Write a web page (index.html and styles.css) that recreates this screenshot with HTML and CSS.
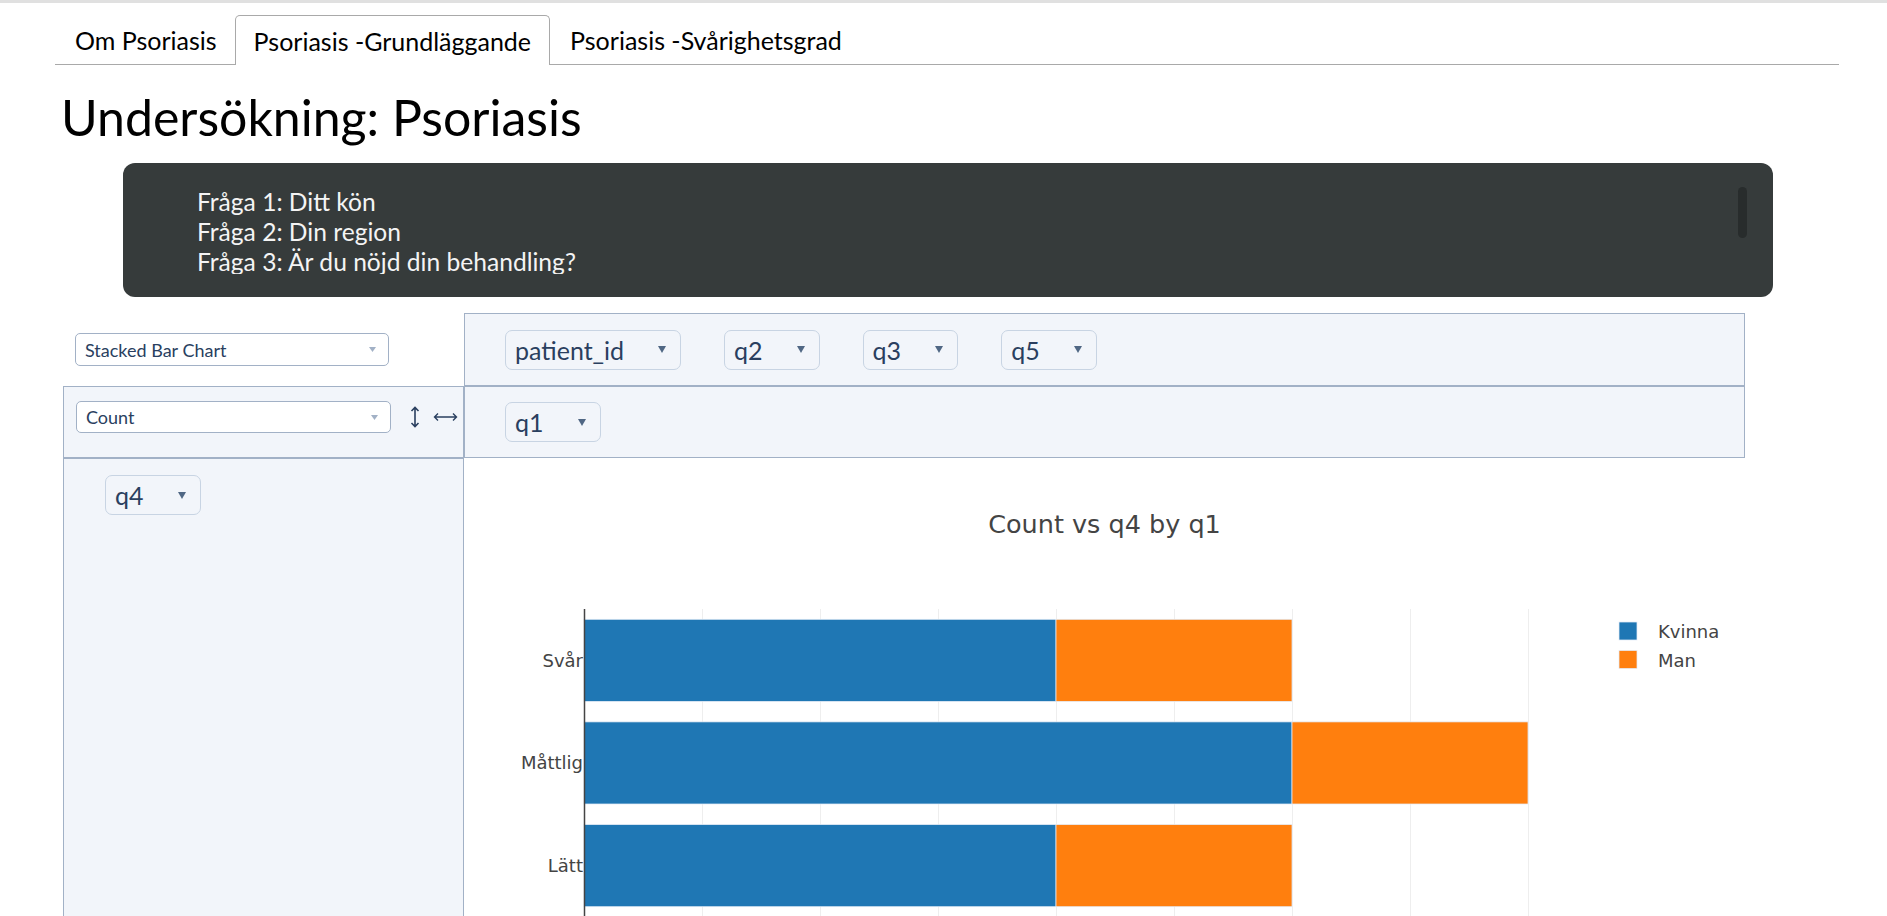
FILE: index.html
```html
<!DOCTYPE html>
<html lang="sv">
<head>
<meta charset="utf-8">
<title>Undersökning: Psoriasis</title>
<link rel="stylesheet" href="styles.css">
</head>
<body>
<div class="topline"></div>
<div class="page">
  <nav class="tabs">
    <div class="tab">Om Psoriasis</div>
    <div class="tab active">Psoriasis -Grundläggande</div>
    <div class="tab">Psoriasis -Svårighetsgrad</div>
  </nav>

  <h1 class="title">Undersökning: Psoriasis</h1>

  <div class="questions">
    <div class="questions-view">
      <p>Fråga 1: Ditt kön</p>
      <p>Fråga 2: Din region</p>
      <p>Fråga 3: Är du nöjd din behandling?</p>
    </div>
    <div class="scroll-track"><div class="scroll-thumb"></div></div>
  </div>

  <div class="pvt">
    <div class="cell renderer">
      <div class="dropdown">
        <span>Stacked Bar Chart</span>
        <svg class="dd-caret" width="7" height="5" viewBox="0 0 7 5"><polygon points="0,0 7,0 3.5,5" fill="#a2b1c6"/></svg>
      </div>
    </div>

    <div class="cell axis unused">
      <span class="pill">patient_id<svg class="pill-caret" width="8" height="7" viewBox="0 0 8 7"><polygon points="0,0 8,0 4,7" fill="#506784"/></svg></span>
      <span class="pill">q2<svg class="pill-caret" width="8" height="7" viewBox="0 0 8 7"><polygon points="0,0 8,0 4,7" fill="#506784"/></svg></span>
      <span class="pill">q3<svg class="pill-caret" width="8" height="7" viewBox="0 0 8 7"><polygon points="0,0 8,0 4,7" fill="#506784"/></svg></span>
      <span class="pill">q5<svg class="pill-caret" width="8" height="7" viewBox="0 0 8 7"><polygon points="0,0 8,0 4,7" fill="#506784"/></svg></span>
    </div>

    <div class="cell axis vals">
      <div class="vals-row">
        <div class="dropdown dropdown-count">
          <span>Count</span>
          <svg class="dd-caret" width="7" height="5" viewBox="0 0 7 5"><polygon points="0,0 7,0 3.5,5" fill="#a2b1c6"/></svg>
        </div>
        <svg class="order-v" width="10" height="22" viewBox="0 0 10 22"><path d="M5 1.5 V20.5 M1.5 5 L5 1.5 L8.5 5 M1.5 17 L5 20.5 L8.5 17" fill="none" stroke="#2a3f5f" stroke-width="1.6"/></svg>
        <svg class="order-h" width="25" height="12" viewBox="0 0 25 12"><path d="M1.5 6 H23.5 M5 2.5 L1.5 6 L5 9.5 M20 2.5 L23.5 6 L20 9.5" fill="none" stroke="#2a3f5f" stroke-width="1.4"/></svg>
      </div>
    </div>

    <div class="cell axis cols">
      <span class="pill">q1<svg class="pill-caret" width="8" height="7" viewBox="0 0 8 7"><polygon points="0,0 8,0 4,7" fill="#506784"/></svg></span>
    </div>

    <div class="cell axis rows">
      <span class="pill">q4<svg class="pill-caret" width="8" height="7" viewBox="0 0 8 7"><polygon points="0,0 8,0 4,7" fill="#506784"/></svg></span>
    </div>

    <div class="cell output">
      <svg class="chart" width="1281" height="470" viewBox="0 0 1281 470">
        <text class="chart-title" x="640.5" y="75" text-anchor="middle">Count vs q4 by q1</text>
        <g stroke="#eeeeee" stroke-width="1">
          <line x1="238.5" y1="151" x2="238.5" y2="470"/>
          <line x1="356.5" y1="151" x2="356.5" y2="470"/>
          <line x1="474.5" y1="151" x2="474.5" y2="470"/>
          <line x1="592.5" y1="151" x2="592.5" y2="470"/>
          <line x1="710.5" y1="151" x2="710.5" y2="470"/>
          <line x1="828.5" y1="151" x2="828.5" y2="470"/>
          <line x1="946.5" y1="151" x2="946.5" y2="470"/>
          <line x1="1064.5" y1="151" x2="1064.5" y2="470"/>
        </g>
        <g stroke="#e5ecf6" stroke-width="0.75">
          <rect x="120" y="161.3" width="472" height="82.1" fill="#1f77b4"/>
          <rect x="592" y="161.3" width="236" height="82.1" fill="#ff7f0e"/>
          <rect x="120" y="263.9" width="708" height="82.1" fill="#1f77b4"/>
          <rect x="828" y="263.9" width="236" height="82.1" fill="#ff7f0e"/>
          <rect x="120" y="366.6" width="472" height="82.1" fill="#1f77b4"/>
          <rect x="592" y="366.6" width="236" height="82.1" fill="#ff7f0e"/>
        </g>
        <line x1="120.5" y1="151" x2="120.5" y2="470" stroke="#444444" stroke-width="1.5"/>
        <g class="tick-label" text-anchor="end">
          <text x="119" y="208.5">Svår</text>
          <text x="119" y="311">Måttlig</text>
          <text x="119" y="413.5">Lätt</text>
        </g>
        <rect x="1155" y="164" width="18" height="18" fill="#1f77b4" stroke="#e5ecf6" stroke-width="0.75"/>
        <rect x="1155" y="192.5" width="18" height="18" fill="#ff7f0e" stroke="#e5ecf6" stroke-width="0.75"/>
        <g class="legend-label">
          <text x="1194" y="180">Kvinna</text>
          <text x="1194" y="209">Man</text>
        </g>
      </svg>
    </div>
  </div>
</div>
</body>
</html>
```

FILE: styles.css
```css
* {
  box-sizing: border-box;
}

html,
body {
  margin: 0;
  padding: 0;
  background: #ffffff;
}

body {
  font-family: Lato, "Noto Sans", "DejaVu Sans", sans-serif;
  color: #000000;
}

.topline {
  height: 3px;
  background: #e0e0e0;
}

.page {
  margin: 0 48px 0 55px;
}

/* Tabs */
.tabs {
  display: flex;
  align-items: flex-end;
  height: 50px;
  margin-top: 12px;
  border-bottom: 1px solid #a9a9a9;
}

.tab {
  display: flex;
  align-items: center;
  height: 49px;
  padding: 0 17px 0 19px;
  font-size: 25px;
  color: #000;
  border: 1px solid transparent;
  border-bottom: 0;
  white-space: nowrap;
}

.tab.active {
  height: 50px;
  margin-bottom: -1px;
  background: #ffffff;
  border-color: #a9a9a9;
  border-radius: 5px 5px 0 0;
  padding: 0 18px;
}

/* Heading */
.title {
  margin: 22px 0 0 6px;
  font-size: 50px;
  font-weight: 400;
  line-height: 61px;
}

/* Questions box */
.questions {
  display: flex;
  margin: 15px 66px 0 68px;
  padding: 24px 26px 23px 74px;
  background: #363b3b;
  border-radius: 12px;
  color: #f4f4f4;
  font-size: 24.6px;
  line-height: 30px;
}

.questions-view {
  flex: 1;
  height: 87px;
  overflow: hidden;
}

.questions-view p {
  margin: 0;
  white-space: nowrap;
}

.scroll-track {
  width: 9px;
  height: 87px;
}

.scroll-thumb {
  height: 51px;
  background: #282c2c;
  border-radius: 5px;
}

/* Pivot UI */
.pvt {
  display: grid;
  grid-template-columns: 401px 1281px;
  grid-template-rows: 73px 72px auto;
  margin: 16px 0 0 8px;
  color: #2a3f5f;
}

.axis {
  background: #f2f5fa;
  border: 1px solid #a2b1c6;
}

.renderer {
  display: flex;
  align-items: center;
  padding-left: 12px;
}

.dropdown {
  display: flex;
  align-items: center;
  justify-content: space-between;
  width: 314px;
  height: 33px;
  padding: 0 12px 0 9px;
  background: #ffffff;
  border: 1px solid #a2b1c6;
  border-radius: 5px;
  font-size: 18px;
  color: #2a3f5f;
}

.dropdown-count {
  width: 315px;
  height: 32px;
}

.unused {
  display: flex;
  align-items: center;
  gap: 43px;
  padding-left: 40px;
}

.vals {
  padding: 14px 0 0 12px;
}

.vals-row {
  display: flex;
  align-items: center;
}

.order-v {
  margin-left: 19px;
}

.order-h {
  margin-left: 13px;
}

.cols {
  display: flex;
  align-items: center;
  padding-left: 40px;
}

.rows {
  padding: 16px 0 0 41px;
}

.pill {
  display: inline-flex;
  align-items: center;
  gap: 34px;
  height: 40px;
  padding: 0 14px 0 9px;
  background: #f2f5fa;
  border: 1px solid #c8d4e3;
  border-radius: 7px;
  font-size: 25px;
  color: #2a3f5f;
  white-space: nowrap;
}

.output {
  background: #ffffff;
}

.chart {
  display: block;
  font-family: "DejaVu Sans", Verdana, sans-serif;
}

.chart-title {
  font-size: 25.5px;
  fill: #444444;
}

.tick-label text,
.legend-label text {
  font-size: 18px;
  fill: #444444;
}
```
